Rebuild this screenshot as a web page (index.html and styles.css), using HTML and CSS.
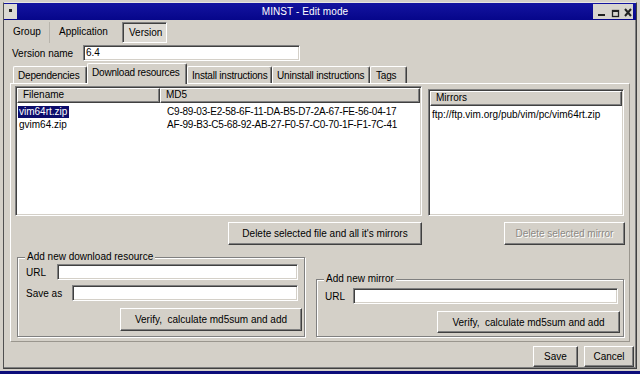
FILE: index.html
```html
<!DOCTYPE html>
<html>
<head>
<meta charset="utf-8">
<title>MINST - Edit mode</title>
<link rel="stylesheet" href="styles.css">
</head>
<body>
<div class="window">
  <div class="titlebar">
    <div class="sysicon"><span class="dot"></span></div>
    <div class="title">MINST - Edit mode</div>
    <div class="controls">
      <svg width="40" height="15" viewBox="0 0 40 15">
        <rect x="5" y="10" width="7" height="2" fill="#222"/>
        <rect x="19.5" y="6.5" width="6" height="6" fill="none" stroke="#222" stroke-width="1.3"/>
        <rect x="19" y="6" width="7" height="2" fill="#222"/>
        <path d="M32 5 L38 12 M38 5 L32 12" stroke="#222" stroke-width="2"/>
      </svg>
    </div>
  </div>
  <div class="client">
    <div class="toptabs">
      <div class="ttab t-group">Group</div>
      <div class="ttab t-app">Application</div>
      <div class="ttab t-ver pressed">Version</div>
    </div>
    <div class="vrow">
      <span class="vlabel">Version name</span>
      <div class="input vname">6.4</div>
    </div>
    <div class="tabs">
      <div class="tab tw-dep">Dependencies</div>
      <div class="tab tw-dl active">Download resources</div>
      <div class="tab tw-inst">Install instructions</div>
      <div class="tab tw-uninst">Uninstall instructions</div>
      <div class="tab tw-tags">Tags</div>
    </div>
    <div class="panel">
      <div class="lists">
        <div class="list files">
          <div class="lhead">
            <div class="hcell hc-name">Filename</div>
            <div class="hcell hc-md5">MD5</div>
          </div>
          <div class="lrows">
            <div class="lrow"><span class="cname"><span class="sel">vim64rt.zip</span></span><span class="cmd5">C9-89-03-E2-58-6F-11-DA-B5-D7-2A-67-FE-56-04-17</span></div>
            <div class="lrow"><span class="cname"><span class="nosel">gvim64.zip</span></span><span class="cmd5">AF-99-B3-C5-68-92-AB-27-F0-57-C0-70-1F-F1-7C-41</span></div>
          </div>
        </div>
        <div class="list mirrors">
          <div class="lhead">
            <div class="hcell hc-mir">Mirrors</div>
          </div>
          <div class="lrows mrows">
            <div class="lrow mrow">ftp://ftp.vim.org/pub/vim/pc/vim64rt.zip</div>
          </div>
        </div>
      </div>
      <div class="btnrow">
        <button class="btn b-delfile">Delete selected file and all it's mirrors</button>
        <button class="btn b-delmir disabled">Delete selected mirror</button>
      </div>
      <div class="groups">
        <fieldset class="grp g-left">
          <legend>Add new download resource</legend>
          <div class="frow">
            <span class="flabel fl-url">URL</span>
            <div class="input fi-url"></div>
          </div>
          <div class="frow fr-save">
            <span class="flabel fl-save">Save as</span>
            <div class="input fi-save"></div>
          </div>
          <div class="fbtn">
            <button class="btn b-verify">Verify,&nbsp; calculate md5sum and add</button>
          </div>
        </fieldset>
        <fieldset class="grp g-right">
          <legend>Add new mirror</legend>
          <div class="frow">
            <span class="flabel fl-murl">URL</span>
            <div class="input fi-murl"></div>
          </div>
          <div class="fbtn fb-mir">
            <button class="btn b-verify2">Verify,&nbsp; calculate md5sum and add</button>
          </div>
        </fieldset>
      </div>
    </div>
    <div class="footer">
      <button class="btn b-save">Save</button>
      <button class="btn b-cancel">Cancel</button>
    </div>
  </div>
</div>
<div class="taskbar"></div>
</body>
</html>
```

FILE: styles.css
```css
html, body {
  margin: 0;
  padding: 0;
}
body {
  width: 640px;
  height: 374px;
  overflow: hidden;
  background: #d4d0c8;
  font: 10px "Liberation Sans", Arial, sans-serif;
  color: #000;
}
.window {
  margin: 2px 0 0 3px;
  width: 634px;
  height: 367px;
  box-sizing: border-box;
  border: 1px solid #404040;
  border-color: #e8e6e2 #404040 #404040 #505050;
  box-shadow: inset -1px -1px 0 #808080;
  background: #d4d0c8;
}
.titlebar {
  height: 17px;
  display: flex;
  align-items: center;
  background: linear-gradient(#1414a0, #06068a);
  color: #fff;
}
.sysicon {
  width: 13px;
  height: 15px;
  background: #dcd9d3;
  display: flex;
}
.sysicon .dot {
  width: 3px;
  height: 3px;
  background: #222;
  margin: 5px 0 0 5px;
}
.title {
  flex: 1;
  text-align: center;
  font-size: 10px;
  letter-spacing: 0.1px;
}
.controls {
  width: 40px;
  height: 15px;
  background: #d8d5cf;
  margin-right: 3px;
  display: flex;
}
.client {
  display: flex;
  flex-direction: column;
}
/* top tab buttons */
.toptabs {
  display: flex;
  height: 21px;
  margin-top: 2px;
  padding-left: 5px;
}
.ttab {
  line-height: 20px;
  box-sizing: border-box;
  height: 21px;
}
.t-group {
  width: 41px;
  padding-left: 4px;
  border-right: 1px solid #b8b4ac;
}
.t-app {
  width: 67px;
  padding-left: 9px;
}
.t-ver {
  margin-left: 5px;
  width: 45px;
  padding-left: 6px;
}
.pressed {
  border: 1px solid;
  border-color: #808080 #fff #fff #808080;
  box-shadow: inset 1px 1px 0 #404040;
  background: #dedbd5;
}
/* version name */
.vrow {
  display: flex;
  align-items: center;
  height: 16px;
  margin-top: 2px;
}
.vlabel {
  width: 71px;
  margin-left: 8px;
}
.input {
  background: #fff;
  height: 16px;
  box-sizing: border-box;
  border: 1px solid;
  border-color: #808080 #fff #fff #808080;
  box-shadow: inset 1px 1px 0 #404040, inset -1px -1px 0 #d4d0c8;
}
.vname {
  width: 217px;
  padding-left: 2px;
  line-height: 14px;
}
/* main tabs */
.tabs {
  display: flex;
  align-items: flex-end;
  height: 21px;
  margin-top: 1px;
  padding-left: 9px;
}
.tab {
  height: 17px;
  box-sizing: border-box;
  border-top: 1px solid #fff;
  border-left: 1px solid #fff;
  border-right: 1px solid #404040;
  box-shadow: inset -1px 0 0 #808080;
  border-radius: 2px 2px 0 0;
  padding: 2px 0 0 4px;
  line-height: 13px;
  white-space: nowrap;
  letter-spacing: -0.2px;
  overflow: hidden;
}
.tab.active {
  height: 21px;
  margin-bottom: -1px;
  padding-top: 2px;
  position: relative;
  z-index: 1;
  background: #d4d0c8;
}
.tw-dep { width: 74px; }
.tw-dl { width: 100px; }
.tw-inst { width: 85px; }
.tw-uninst { width: 98px; }
.tw-tags { width: 37px; padding-left: 5px; }
/* panel */
.panel {
  margin: 0 6px;
  height: 259px;
  box-sizing: border-box;
  border: 1px solid;
  border-color: #fff #9a968e #9a968e #fff;
}
.lists {
  display: flex;
  align-items: flex-start;
  margin-top: 2px;
  padding-left: 4px;
  height: 130px;
}
.list {
  background: #fff;
  box-sizing: border-box;
  border: 1px solid;
  border-color: #808080 #fff #fff #808080;
  box-shadow: inset 1px 1px 0 #404040, inset -1px -1px 0 #d4d0c8;
  padding: 1px;
  display: flex;
  flex-direction: column;
}
.files {
  width: 407px;
  height: 130px;
}
.mirrors {
  width: 196px;
  height: 127px;
  margin-left: 6px;
  margin-top: 3px;
}
.lhead {
  display: flex;
  height: 15px;
  flex: none;
}
.hcell {
  box-sizing: border-box;
  height: 15px;
  background: #d4d0c8;
  border: 1px solid;
  border-color: #fff #404040 #404040 #fff;
  box-shadow: inset -1px -1px 0 #808080;
  line-height: 12px;
  white-space: nowrap;
}
.hc-name {
  width: 143px;
  padding-left: 5px;
}
.hc-md5 {
  flex: 1;
  padding-left: 5px;
}
.hc-mir {
  flex: 1;
  padding-left: 5px;
}
.lrows {
  padding-top: 2px;
}
.lrow {
  display: flex;
  height: 13px;
  line-height: 13px;
  white-space: nowrap;
}
.cname {
  width: 149px;
  padding-left: 1px;
}
.sel {
  background: #0c0c6c;
  color: #fff;
  padding: 0 2px 0 1px;
  display: inline-block;
  line-height: 12px;
}
.nosel {
  padding-left: 1px;
}
.cmd5 {
  letter-spacing: -0.2px;
}
.mrows {
  padding-top: 2px;
}
.mrow {
  padding-left: 2px;
}
/* buttons */
.btn {
  font: inherit;
  color: #000;
  background: #d4d0c8;
  box-sizing: border-box;
  border: 1px solid;
  border-color: #fff #404040 #404040 #fff;
  box-shadow: inset -1px -1px 0 #808080;
  padding: 0;
  margin: 0;
  white-space: nowrap;
}
.btn.disabled {
  color: #8c8984;
  text-shadow: 1px 1px 0 #fff;
}
.btnrow {
  display: flex;
  margin-top: 6px;
  height: 23px;
}
.b-delfile {
  margin-left: 217px;
  width: 194px;
  height: 23px;
}
.b-delmir {
  margin-left: 82px;
  width: 121px;
  height: 23px;
}
/* groups */
.groups {
  display: flex;
  align-items: flex-end;
  margin-top: 6px;
}
.grp {
  margin: 0;
  box-sizing: border-box;
  border: 1px solid #808080;
  box-shadow: 1px 1px 0 #fff, inset 1px 1px 0 #fff;
  min-width: 0;
}
.grp legend {
  padding: 0 2px;
  line-height: 12px;
  height: 12px;
  background: #d4d0c8;
}
.g-left {
  margin-left: 6px;
  width: 288px;
  padding: 1px 5px 5px 7px;
}
.g-right {
  margin-left: 11px;
  width: 308px;
  padding: 3px 5px 3px 7px;
}
.frow {
  display: flex;
  align-items: center;
  height: 16px;
}
.fr-save {
  margin-top: 5px;
}
.flabel {
  margin-left: 1px;
}
.fl-url { width: 31px; }
.fl-save { width: 46px; }
.fl-murl { width: 28px; }
.fi-url { width: 241px; }
.fi-save { width: 226px; }
.fi-murl { width: 265px; }
.fbtn {
  display: flex;
  justify-content: flex-end;
  margin-top: 7px;
}
.b-verify {
  width: 182px;
  height: 23px;
  margin-right: -3px;
}
.b-verify2 {
  width: 183px;
  height: 22px;
  margin-right: -2px;
}
/* footer */
.footer {
  display: flex;
  justify-content: flex-end;
  gap: 6px;
  margin-top: 4px;
  padding-right: 2px;
  height: 21px;
}
.b-save {
  width: 45px;
  height: 21px;
}
.b-cancel {
  width: 50px;
  height: 21px;
}
.taskbar {
  margin-top: 2px;
  height: 3px;
  background: #0c0c7a;
}
```
